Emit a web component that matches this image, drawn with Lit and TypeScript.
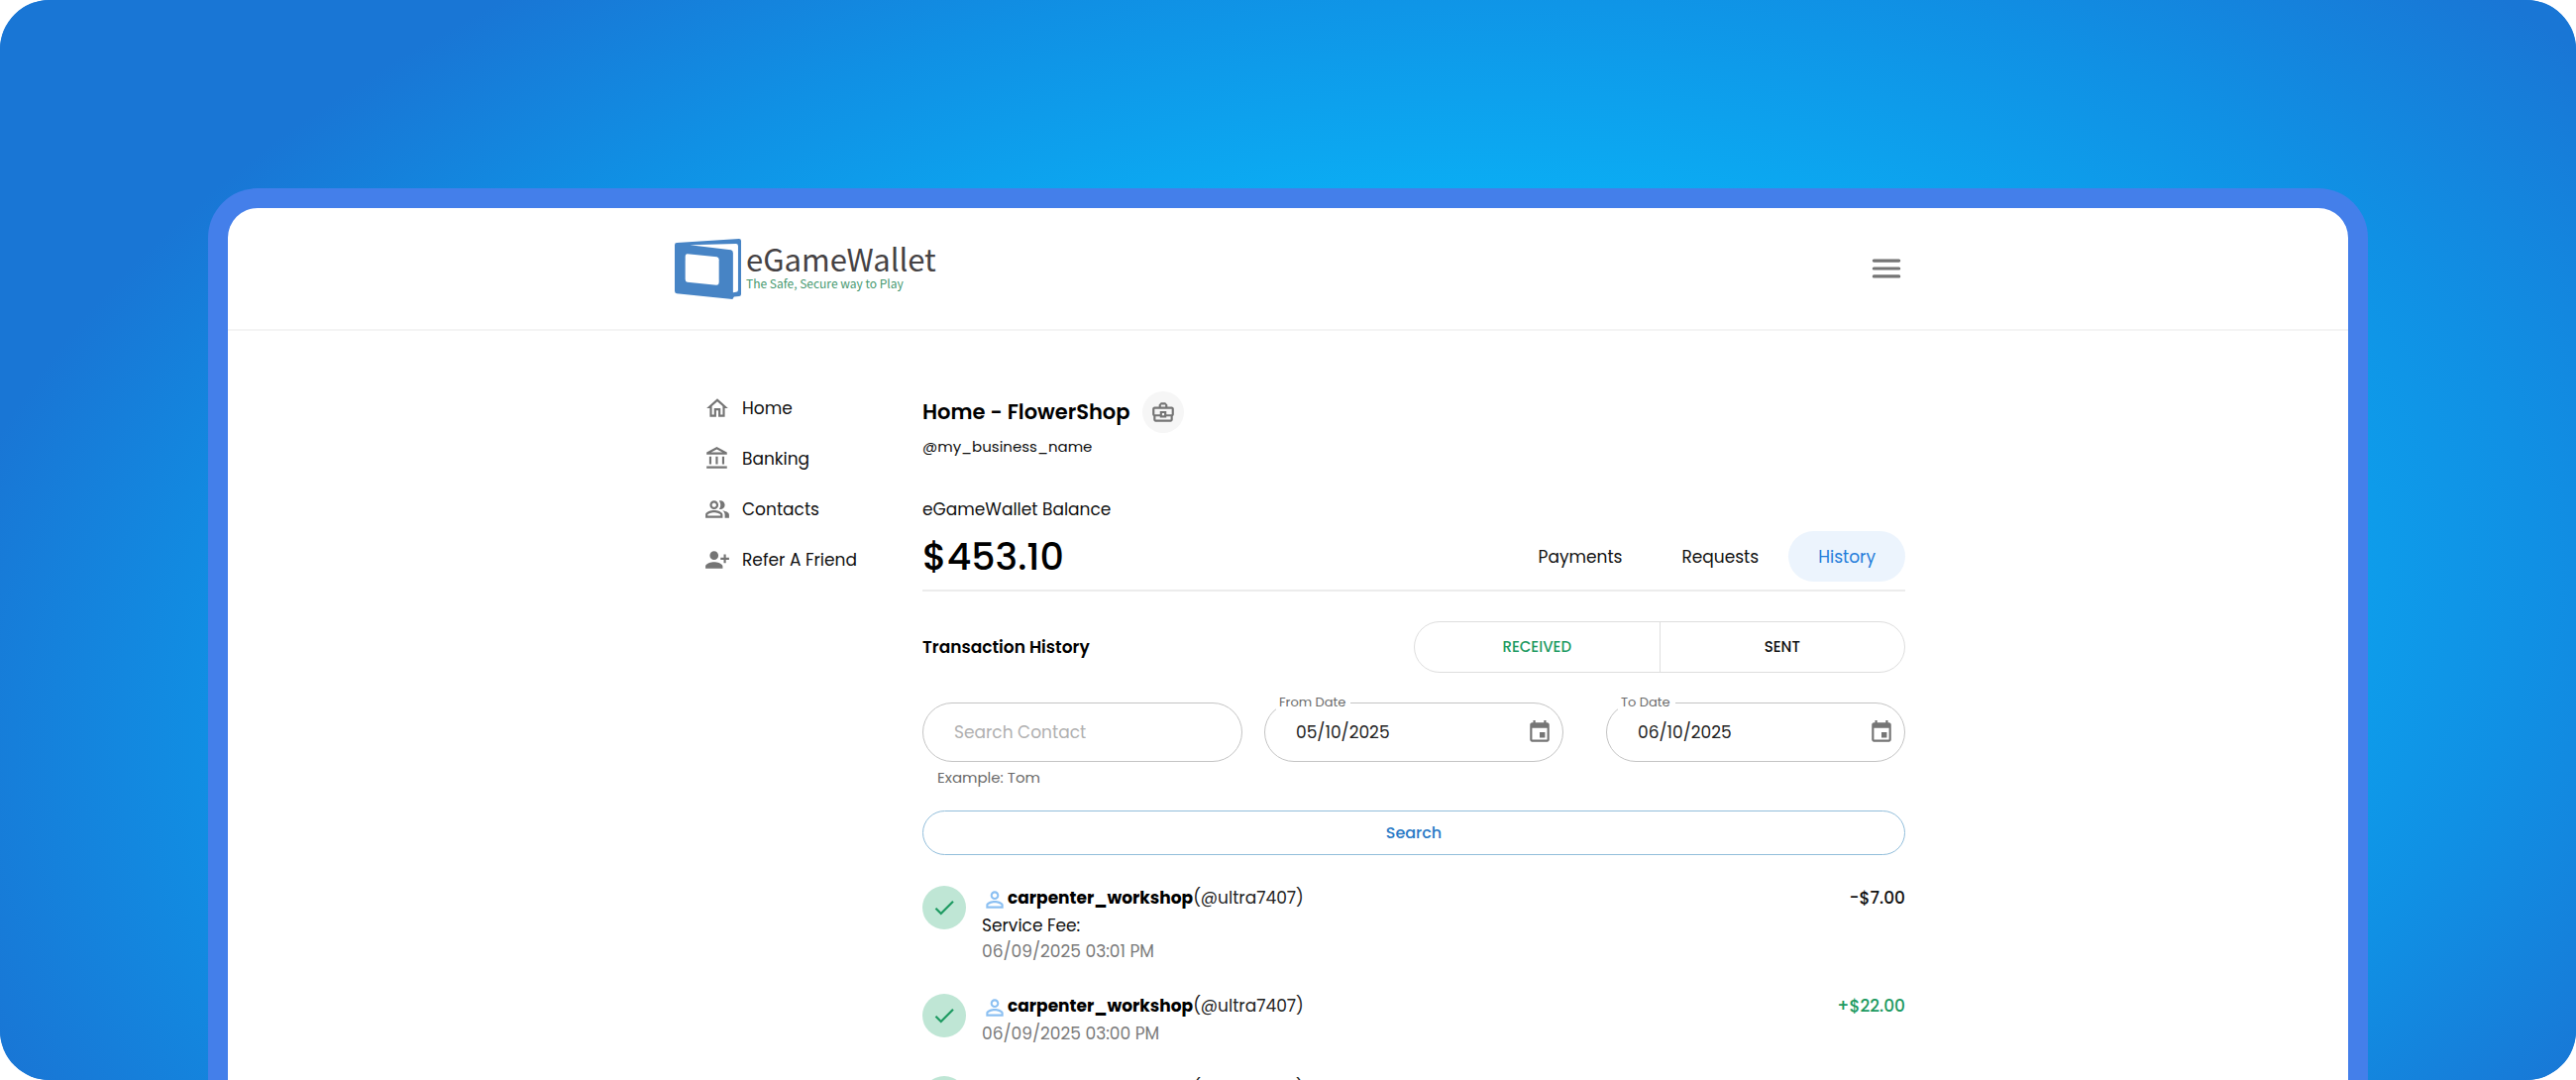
import { LitElement, html, css, svg, nothing } from "lit";
import { customElement, property, state } from "lit/decorators.js";
import { classMap } from "lit/directives/class-map.js";

const ICONS: Record<string, string> = {
  home: "m12 5.69 5 4.5V18h-2v-6H9v6H7v-7.81l5-4.5M12 3 2 12h3v8h6v-6h2v6h6v-8h3L12 3z",
  bank: "M6.5 10h-2v7h2v-7zm6 0h-2v7h2v-7zm8.5 9H2v2h19v-2zm-2.5-9h-2v7h2v-7zm-7-6.74L16.71 6H6.29l5.21-2.74m0-2.26L2 6v2h19V6l-9.5-5z",
  people:
    "M16.67 13.13C18.04 14.06 19 15.32 19 17v3h4v-3c0-2.18-3.57-3.47-6.33-3.87zM15 12c2.21 0 4-1.79 4-4s-1.79-4-4-4c-.47 0-.91.1-1.33.24C14.5 5.27 15 6.58 15 8s-.5 2.73-1.33 3.76c.42.14.86.24 1.33.24zm-6 0c2.21 0 4-1.79 4-4s-1.79-4-4-4-4 1.79-4 4 1.79 4 4 4zm0-6c1.1 0 2 .9 2 2s-.9 2-2 2-2-.9-2-2 .9-2 2-2zm0 7c-2.67 0-8 1.34-8 4v3h16v-3c0-2.66-5.33-4-8-4zm6 5H3v-.99C3.2 16.29 6.3 15 9 15s5.8 1.29 6 2v1z",
  refer:
    "M13 8c0-2.21-1.79-4-4-4S5 5.79 5 8s1.79 4 4 4 4-1.79 4-4zm2 2v2h3v3h2v-3h3v-2h-3V7h-2v3h-3zM1 18v2h16v-2c0-2.66-5.33-4-8-4s-8 1.34-8 4z",
  briefcase:
    "M20 7h-4V5l-2-2h-4L8 5v2H4c-1.1 0-2 .9-2 2v5c0 .75.4 1.38 1 1.73V19c0 1.11.89 2 2 2h14c1.11 0 2-.89 2-2v-3.28c.59-.35 1-.99 1-1.72V9c0-1.1-.9-2-2-2zM10 5h4v2h-4V5zM4 9h16v5h-5v-3H9v3H4V9zm9 6h-2v-2h2v2zm6 4H5v-3h4v1h6v-1h4v3z",
  event:
    "M17 12h-5v5h5v-5zM16 1v2H8V1H6v2H5c-1.11 0-1.99.9-1.99 2L3 19c0 1.1.89 2 2 2h14c1.1 0 2-.9 2-2V5c0-1.1-.9-2-2-2h-1V1h-2zm3 18H5V8h14v11z",
  check: "M9 16.17 4.83 12l-1.42 1.41L9 19 21 7l-1.41-1.41z",
  person:
    "M12 5.9c1.16 0 2.1.94 2.1 2.1s-.94 2.1-2.1 2.1S9.9 9.16 9.9 8s.94-2.1 2.1-2.1m0 9c2.97 0 6.1 1.46 6.1 2.1v1.1H5.9V17c0-.64 3.13-2.1 6.1-2.1M12 4C9.79 4 8 5.79 8 8s1.79 4 4 4 4-1.79 4-4-1.79-4-4-4zm0 9c-2.67 0-8 1.34-8 4v3h16v-3c0-2.66-5.33-4-8-4z",
  menu: "M4 6h16a1 1 0 0 1 0 2H4a1 1 0 0 1 0-2zm0 5h16a1 1 0 0 1 0 2H4a1 1 0 0 1 0-2zm0 5h16a1 1 0 0 1 0 2H4a1 1 0 0 1 0-2z",
};

const icon = (name: string) =>
  html`<svg class="icon" viewBox="0 0 24 24" aria-hidden="true">${svg`<path d=${ICONS[name]}></path>`}</svg>`;

const shared = css`
  *,
  *::before {
    box-sizing: border-box;
  }
  .icon {
    display: block;
    flex: none;
    width: 26px;
    height: 26px;
    fill: currentColor;
  }
  button,
  input {
    margin: 0;
    padding: 0;
    border: 0;
    background: none;
    font: inherit;
    color: inherit;
  }
  button {
    cursor: pointer;
  }
`;

interface Transaction {
  name: string;
  handle: string;
  amount: string;
  credit?: boolean;
  note?: string;
  date?: string;
}

@customElement("wallet-logo")
export class WalletLogo extends LitElement {
  static styles = css`
    :host {
      display: block;
    }
    .logo {
      display: flex;
      align-items: center;
      gap: 5px;
      text-decoration: none;
    }
    .mark {
      display: block;
      width: 67px;
      height: 61px;
    }
    .words {
      display: flex;
      flex-direction: column;
      padding-bottom: 4px;
      font-family: "Noto Sans CJK SC", "Noto Sans", sans-serif;
      white-space: nowrap;
    }
    .name {
      font-size: 31px;
      line-height: 34px;
      color: #454244;
    }
    .tagline {
      font-size: 12px;
      line-height: 16px;
      color: #46996f;
    }
  `;
  render() {
    return html`<a class="logo" href="#home">
      <svg class="mark" viewBox="0 0 66 60" aria-hidden="true">
        <path
          fill="#4784c5"
          d="M0 6Q0 4 2 4L64 0Q66 0 66 2V55Q66 57 64 57L59 57.6L57.5 60L2 54.5Q0 54 0 52Z"
        ></path>
        <path fill="#fff" d="M15 6L61 5Q63 5 63 7V51Q63 53 61 53L58 53.5V14Q58 11.5 56 11Z"></path>
        <path
          fill="#fff"
          d="M12.5 15L42 18Q44 18.5 44 21V43Q44 46 41.5 46L12.5 43Q10.5 42.5 10.5 40V18Q10.5 15 12.5 15Z"
        ></path>
      </svg>
      <span class="words">
        <span class="name">eGameWallet</span>
        <span class="tagline">The Safe, Secure way to Play</span>
      </span>
    </a>`;
  }
}

@customElement("date-field")
export class DateField extends LitElement {
  @property() label = "";
  @property() value = "";
  static styles = [
    shared,
    css`
      :host {
        display: block;
      }
      .field {
        position: relative;
        display: flex;
        align-items: center;
        height: 60px;
        padding: 0 10px 0 31px;
        border: 1px solid #c4c4c4;
        border-radius: 30px;
      }
      .label {
        position: absolute;
        top: -11px;
        left: 11px;
        padding: 0 5px 0 3px;
        background: #fff;
        font-size: 13px;
        line-height: 20px;
        color: #6b6b6b;
      }
      .input {
        flex: 1;
        min-width: 0;
        outline: 0;
        color: #222;
      }
      .pick {
        color: #757575;
      }
    `,
  ];
  render() {
    return html`<div class="field">
      <label class="label" for="date">${this.label}</label>
      <input class="input" id="date" type="text" .value=${this.value} />
      <button class="pick" type="button" aria-label="Choose date">${icon("event")}</button>
    </div>`;
  }
}

@customElement("transaction-row")
export class TransactionRow extends LitElement {
  @property({ attribute: false }) item!: Transaction;
  static styles = [
    shared,
    css`
      :host {
        display: flex;
        gap: 16px;
        line-height: 26px;
      }
      .status {
        display: flex;
        flex: none;
        align-items: center;
        justify-content: center;
        width: 44px;
        height: 44px;
        margin-top: 1px;
        border-radius: 50%;
        background: #bfe6d5;
        color: #1d9a61;
      }
      .details {
        flex: 1;
      }
      .who {
        display: flex;
      }
      .avatar {
        padding-top: 2px;
        color: #8cc0f2;
      }
      .name {
        font-weight: 700;
        color: #000;
      }
      .handle {
        color: #222;
      }
      .date {
        color: #7a7a7a;
      }
      .amount {
        font-weight: 500;
      }
      .credit {
        color: #1d9a61;
      }
    `,
  ];
  render() {
    const t = this.item;
    return html`<span class="status">${icon("check")}</span>
      <div class="details">
        <div class="who">
          <span class="avatar">${icon("person")}</span>
          <span class="name">${t.name}</span>
          <span class="handle">(${t.handle})</span>
        </div>
        ${t.note ? html`<div>${t.note}</div>` : nothing}
        ${t.date ? html`<div class="date">${t.date}</div>` : nothing}
      </div>
      <div class=${classMap({ amount: true, credit: !!t.credit })}>${t.amount}</div>`;
  }
}

@customElement("app-root")
export class AppRoot extends LitElement {
  @state() private tab = "History";
  @state() private direction = "RECEIVED";

  private nav = [
    { icon: "home", label: "Home" },
    { icon: "bank", label: "Banking" },
    { icon: "people", label: "Contacts" },
    { icon: "refer", label: "Refer A Friend" },
  ];

  private items: Transaction[] = [
    {
      name: "carpenter_workshop",
      handle: "@ultra7407",
      amount: "-$7.00",
      note: "Service Fee:",
      date: "06/09/2025 03:01 PM",
    },
    {
      name: "carpenter_workshop",
      handle: "@ultra7407",
      amount: "+$22.00",
      credit: true,
      date: "06/09/2025 03:00 PM",
    },
    { name: "carpenter_workshop", handle: "@ultra7407", amount: "-$10.00" },
  ];

  static styles = [
    shared,
    css`
      :host {
        display: block;
        font-family: Poppins, Inter, sans-serif;
        font-size: 17px;
        line-height: 26px;
        color: #111;
        background: #fff;
      }
      .stage {
        position: relative;
        display: flex;
        height: 100vh;
        padding: 190px 210px 0;
        overflow: hidden;
        border-radius: 50px;
        background: #1976d5;
      }
      .stage::before {
        content: "";
        position: absolute;
        inset: -30%;
        background: radial-gradient(
          ellipse 36% 51% at 52% 57%,
          #06bdfb 0%,
          #0bacf3 52%,
          #1090e4 78%,
          #1976d5 100%
        );
        transform: rotate(-6deg);
      }
      .device {
        position: relative;
        flex: 1;
        min-width: 0;
        border: 20px solid #447fea;
        border-bottom: 0;
        border-radius: 50px 50px 0 0;
        background: #fff;
      }
      .header {
        border-bottom: 2px solid #f4f4f4;
      }
      .bar,
      .body {
        display: flex;
        max-width: 1246px;
        margin: 0 auto;
        padding-left: 4px;
      }
      .bar {
        align-items: center;
        justify-content: space-between;
        height: 122px;
      }
      .menu {
        color: #757575;
      }
      .menu .icon {
        width: 38px;
        height: 38px;
      }
      .nav {
        flex: none;
        width: 250px;
        padding: 52px 0 0 30px;
      }
      .nav-item {
        display: flex;
        align-items: center;
        gap: 12px;
        height: 51px;
        color: inherit;
        text-decoration: none;
      }
      .nav-item .icon {
        color: #757575;
      }
      .main {
        flex: 1;
        min-width: 0;
        padding-top: 61px;
      }
      .title-row {
        display: flex;
        align-items: center;
        gap: 12px;
      }
      .title {
        margin: 0;
        font-size: 21px;
        font-weight: 600;
        color: #000;
      }
      .badge {
        display: flex;
        align-items: center;
        justify-content: center;
        width: 42px;
        height: 42px;
        border-radius: 50%;
        background: #f6f6f6;
        color: #757575;
      }
      .username {
        margin-top: 3px;
        font-size: 15px;
        line-height: 22px;
      }
      .balance-label {
        margin-top: 39px;
      }
      .balance-row {
        display: flex;
        align-items: center;
        justify-content: space-between;
        margin-top: 9px;
        padding-bottom: 8px;
        border-bottom: 2px solid #ececec;
      }
      .balance {
        font-size: 38px;
        font-weight: 500;
        color: #000;
      }
      .tabs {
        display: flex;
      }
      .tab {
        height: 51px;
        padding: 0 30px;
        border-radius: 26px;
      }
      .tab.active {
        background: #ecf4fd;
        color: #1f7cda;
      }
      .history-row {
        display: flex;
        align-items: center;
        justify-content: space-between;
        margin-top: 30px;
      }
      .subtitle {
        margin: 0;
        font-size: 17px;
        font-weight: 600;
        color: #000;
      }
      .toggle {
        display: flex;
        width: 50%;
        height: 52px;
        border: 1px solid #dedede;
        border-radius: 26px;
      }
      .choice {
        flex: 1;
        font-size: 15px;
        font-weight: 500;
      }
      .choice + .choice {
        border-left: 1px solid #dedede;
      }
      .choice.active {
        color: #1d9a61;
      }
      .filters {
        display: flex;
        gap: 22px;
        margin-top: 30px;
      }
      .contact {
        flex: 323;
        min-width: 0;
      }
      .contact-input {
        display: block;
        width: 100%;
        height: 60px;
        padding: 0 31px;
        border: 1px solid #c4c4c4;
        border-radius: 30px;
        outline: 0;
      }
      .contact-input::placeholder {
        color: #b0b0b0;
        opacity: 1;
      }
      .hint {
        margin-top: 5px;
        padding-left: 15px;
        font-size: 15px;
        line-height: 22px;
        color: #6b6b6b;
      }
      .dates {
        display: flex;
        flex: 647;
        gap: 43px;
        min-width: 0;
      }
      .dates date-field {
        flex: 1;
        min-width: 0;
      }
      .search {
        display: block;
        width: 100%;
        height: 45px;
        margin-top: 22px;
        border: 1px solid #92bedb;
        border-radius: 23px;
        font-size: 16px;
        font-weight: 500;
        color: #2a7ac6;
      }
      .list {
        display: flex;
        flex-direction: column;
        gap: 29px;
        margin: 30px 0 0;
        padding: 0;
        list-style: none;
      }
    `,
  ];

  render() {
    return html`<div class="stage">
      <div class="device">
        <header class="header">
          <div class="bar">
            <wallet-logo></wallet-logo>
            <button class="menu" type="button" aria-label="Menu">${icon("menu")}</button>
          </div>
        </header>
        <div class="body">
          <nav class="nav">
            ${this.nav.map(
              (n) => html`<a class="nav-item" href="#${n.icon}">${icon(n.icon)}<span>${n.label}</span></a>`,
            )}
          </nav>
          <main class="main">
            <div class="title-row">
              <h1 class="title">Home - FlowerShop</h1>
              <button class="badge" type="button" aria-label="Business account">${icon("briefcase")}</button>
            </div>
            <div class="username">@my_business_name</div>
            <div class="balance-label">eGameWallet Balance</div>
            <div class="balance-row">
              <span class="balance">$453.10</span>
              <div class="tabs">
                ${["Payments", "Requests", "History"].map(
                  (t) => html`<button
                    type="button"
                    class=${classMap({ tab: true, active: t === this.tab })}
                    @click=${() => (this.tab = t)}
                  >
                    ${t}
                  </button>`,
                )}
              </div>
            </div>
            <div class="history-row">
              <h2 class="subtitle">Transaction History</h2>
              <div class="toggle">
                ${["RECEIVED", "SENT"].map(
                  (d) => html`<button
                    type="button"
                    class=${classMap({ choice: true, active: d === this.direction })}
                    @click=${() => (this.direction = d)}
                  >
                    ${d}
                  </button>`,
                )}
              </div>
            </div>
            <form @submit=${(e: Event) => e.preventDefault()}>
              <div class="filters">
                <div class="contact">
                  <input
                    class="contact-input"
                    type="text"
                    placeholder="Search Contact"
                    aria-label="Search Contact"
                    aria-describedby="hint"
                  />
                  <div class="hint" id="hint">Example: Tom</div>
                </div>
                <div class="dates">
                  <date-field label="From Date" value="05/10/2025"></date-field>
                  <date-field label="To Date" value="06/10/2025"></date-field>
                </div>
              </div>
              <button class="search" type="submit">Search</button>
            </form>
            <ul class="list">
              ${this.items.map((t) => html`<li><transaction-row .item=${t}></transaction-row></li>`)}
            </ul>
          </main>
        </div>
      </div>
    </div>`;
  }
}
